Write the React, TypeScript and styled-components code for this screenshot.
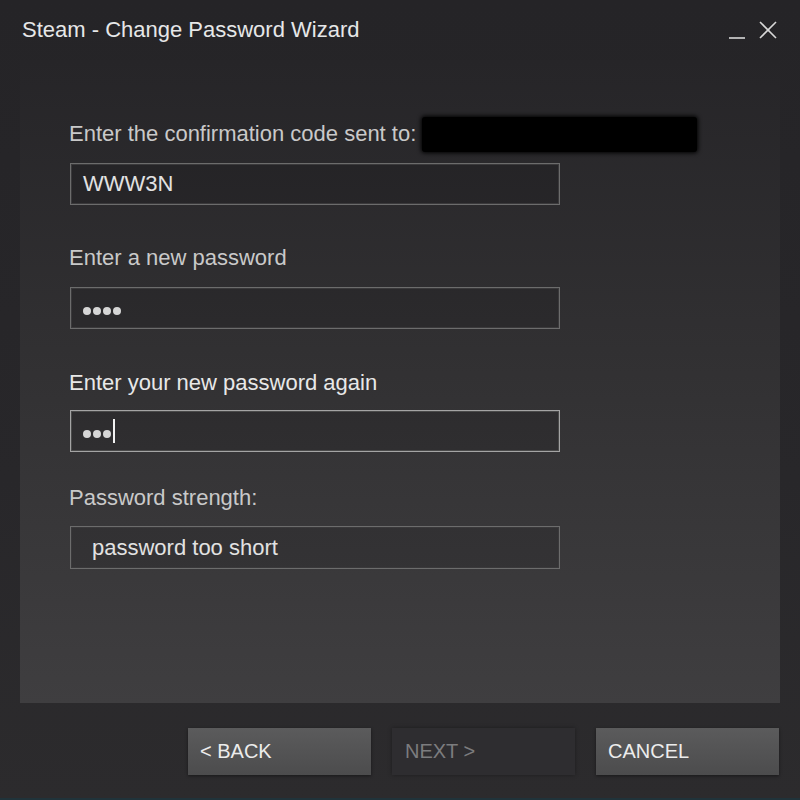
import React from "react";
import styled, { createGlobalStyle } from "styled-components";

const Global = createGlobalStyle`
  html, body { margin: 0; padding: 0; background: #262528; }
  body { font-family: "Liberation Sans", Arial, sans-serif; }
  * { box-sizing: border-box; }
`;

const Window = styled.div`
  width: 800px;
  height: 800px;
  display: flex;
  flex-direction: column;
  background: linear-gradient(#252427 0%, #28272a 60%, #2c2b2d 100%);
  border-bottom: 2px solid #20333a;
  overflow: hidden;
`;

const TitleBar = styled.div`
  height: 60px;
  display: flex;
  align-items: flex-start;
  justify-content: space-between;
  padding: 18px 22px 0 22px;
`;

const Title = styled.div`
  font-size: 22px;
  line-height: 24px;
  color: #e6e7e8;
`;

const Controls = styled.div`
  display: flex;
  align-items: flex-start;
  gap: 12px;
  margin-top: 2px;
`;

const CtrlIcon = styled.svg`
  display: block;
  stroke: #d8d8d8;
  stroke-width: 1.6;
  fill: none;
`;

const Panel = styled.div`
  margin: 0 20px;
  height: 643px;
  background: linear-gradient(#262528 0%, #313032 45%, #3f3e40 100%);
  padding: 62px 0 0 49px;
  display: flex;
  flex-direction: column;
`;

const Field = styled.div<{ $gap: number; $mb: number }>`
  display: flex;
  flex-direction: column;
  gap: ${(p) => p.$gap}px;
  margin-bottom: ${(p) => p.$mb}px;
`;

const LabelRow = styled.div`
  height: 24px;
  display: flex;
  align-items: center;
  gap: 6px;
`;

const Label = styled.div<{ $bright?: boolean }>`
  font-size: 22px;
  line-height: 24px;
  color: ${(p) => (p.$bright ? "#e8e8e8" : "#c9c9c9")};
`;

const Redact = styled.div`
  width: 275px;
  height: 35px;
  flex: none;
  background: #000;
  border-radius: 3px;
  box-shadow: 0 0 4px 1px #000;
`;

const Box = styled.div<{ $focused?: boolean; $indent?: number; $h?: number }>`
  width: 490px;
  height: ${(p) => p.$h ?? 42}px;
  margin-left: 1px;
  display: flex;
  align-items: center;
  padding-left: ${(p) => p.$indent ?? 12}px;
  background: rgba(0, 0, 0, 0.1);
  border: 1px solid ${(p) => (p.$focused ? "#a4a4a4" : "#6c6c6c")};
  box-shadow: inset 0 0 0 1px ${(p) => (p.$focused ? "#4a4a4a" : "#3a393b")};
  font-size: 22px;
  color: #e2e2e2;
`;

const Dots = styled.div`
  display: flex;
  align-items: center;
  gap: 2px;
`;

const Dot = styled.span`
  width: 8px;
  height: 8px;
  border-radius: 50%;
  background: #d6d6d6;
  transform: translateY(3px);
`;

const Caret = styled.span`
  width: 1.5px;
  height: 24px;
  background: #f2f2f2;
`;

const Footer = styled.div`
  flex: 1;
  display: flex;
  justify-content: flex-end;
  align-items: flex-start;
  padding: 25px 21px 0 0;
  gap: 21px;
`;

const Button = styled.div<{ $variant: "normal" | "disabled" }>`
  width: 183px;
  height: 47px;
  display: flex;
  align-items: center;
  padding-left: ${(p) => (p.$variant === "disabled" ? 13 : 12)}px;
  font-size: 20px;
  color: ${(p) => (p.$variant === "disabled" ? "#7c7c7e" : "#ececec")};
  background: ${(p) =>
    p.$variant === "disabled"
      ? "#2e2d30"
      : "linear-gradient(#5b5b5c 0%, #4c4c4d 100%)"};
  box-shadow: ${(p) =>
    p.$variant === "disabled"
      ? "0 0 4px rgba(0,0,0,0.35)"
      : "0 1px 3px rgba(0,0,0,0.45)"};
`;

function DotField({ n, caret }: { n: number; caret?: boolean }) {
  return (
    <Dots>
      {Array.from({ length: n }).map((_, i) => (
        <Dot key={i} />
      ))}
      {caret && <Caret />}
    </Dots>
  );
}

export default function App() {
  return (
    <>
      <Global />
      <Window>
        <TitleBar>
          <Title>Steam - Change Password Wizard</Title>
          <Controls>
            <CtrlIcon width="18" height="20" viewBox="0 0 18 20">
              <line x1="1" y1="18" x2="17" y2="18" />
            </CtrlIcon>
            <CtrlIcon width="20" height="20" viewBox="0 0 20 20">
              <line x1="2" y1="2" x2="18" y2="18" />
              <line x1="18" y1="2" x2="2" y2="18" />
            </CtrlIcon>
          </Controls>
        </TitleBar>
        <Panel>
          <Field $gap={17} $mb={41}>
            <LabelRow>
              <Label>Enter the confirmation code sent to:</Label>
              <Redact />
            </LabelRow>
            <Box>WWW3N</Box>
          </Field>
          <Field $gap={17} $mb={42}>
            <Label>Enter a new password</Label>
            <Box>
              <DotField n={4} />
            </Box>
          </Field>
          <Field $gap={15} $mb={34}>
            <Label $bright>Enter your new password again</Label>
            <Box $focused>
              <DotField n={3} caret />
            </Box>
          </Field>
          <Field $gap={16} $mb={0}>
            <Label>Password strength:</Label>
            <Box $indent={21} $h={43}>password too short</Box>
          </Field>
        </Panel>
        <Footer>
          <Button $variant="normal">&lt; BACK</Button>
          <Button $variant="disabled">NEXT &gt;</Button>
          <Button $variant="normal">CANCEL</Button>
        </Footer>
      </Window>
    </>
  );
}
